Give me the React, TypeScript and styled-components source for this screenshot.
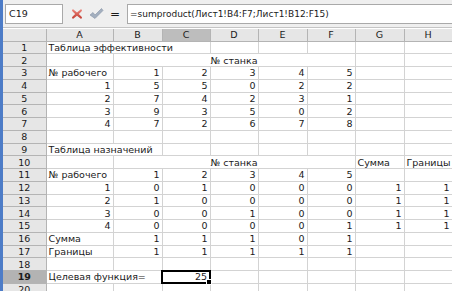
import styled, { createGlobalStyle } from 'styled-components';

const GlobalStyle = createGlobalStyle`
  html, body {
    margin: 0;
    padding: 0;
    background: #ffffff;
  }
  body {
    font-family: 'DejaVu Sans', 'Liberation Sans', sans-serif;
    font-size: 9.5px;
    color: #1a1a1a;
  }
`;

const Window = styled.div`
  display: flex;
  width: 452px;
  height: 291px;
  overflow: hidden;
`;

const Edge = styled.div`
  width: 3px;
  flex-shrink: 0;
  background: #4d7cc7;
`;

const Main = styled.div`
  flex: 1;
  min-width: 0;
  display: flex;
  flex-direction: column;
`;

const FormulaBar = styled.div`
  height: 28px;
  flex-shrink: 0;
  display: flex;
  align-items: center;
  padding-left: 2px;
  background: #efefef;
  border-bottom: 1px solid #c4c4c4;
  box-sizing: border-box;
  font-size: 9px;
`;

const NameBox = styled.div`
  width: 58px;
  height: 20px;
  box-sizing: border-box;
  border: 1px solid #a9a9a9;
  background: #ffffff;
  padding-left: 3px;
  display: flex;
  align-items: center;
  font-size: 9.5px;
`;

const IconButton = styled.div<{ $gap: number }>`
  width: 16px;
  height: 18px;
  display: flex;
  align-items: center;
  justify-content: center;
  margin-left: ${(p) => p.$gap}px;
`;

const Equals = styled.div`
  width: 12px;
  margin-left: 5px;
  font-size: 12px;
  text-align: center;
`;

const FormulaInput = styled.div`
  flex: 1;
  height: 20px;
  margin-left: 6px;
  box-sizing: border-box;
  border: 1px solid #a9a9a9;
  border-right: none;
  background: #ffffff;
  padding-left: 2px;
  display: flex;
  align-items: center;
  white-space: nowrap;
  overflow: hidden;
`;

const Sheet = styled.table`
  border-collapse: collapse;
  table-layout: fixed;
  width: 449px;
  margin-top: 1px;
`;

const Row = styled.tr`
  height: 12.75px;
`;

const HeadRow = styled.tr`
  height: 12px;
`;

const Corner = styled.th`
  background: #e6e6e6;
  border: 1px solid #b4b4b4;
  border-left: none;
  border-top: none;
  padding: 0;
`;

const ColHead = styled.th<{ $active?: boolean }>`
  background: ${(p) => (p.$active ? '#bdbdbd' : '#e6e6e6')};
  border: 1px solid #b4b4b4;
  border-top: none;
  padding: 0;
  font-weight: normal;
  text-align: center;
  line-height: 11px;
  overflow: hidden;
`;

const RowHead = styled.th<{ $active?: boolean }>`
  background: ${(p) => (p.$active ? '#b3b3b3' : '#e6e6e6')};
  border: 1px solid #b4b4b4;
  border-left: none;
  padding: 0;
  font-weight: ${(p) => (p.$active ? 'bold' : 'normal')};
  text-align: center;
  line-height: 11px;
  overflow: hidden;
`;

const Cell = styled.td<{ $align?: 'left' | 'right' | 'center' }>`
  border: 1px solid #d3d3d3;
  padding: 0 2px;
  text-align: ${(p) => p.$align || 'right'};
  line-height: 11px;
  white-space: nowrap;
  overflow: hidden;
`;

const Selected = styled.td`
  position: relative;
  border: 2px solid #000000;
  padding: 0 2px;
  text-align: right;
  line-height: 10px;
  white-space: nowrap;
`;

const FillHandle = styled.span`
  position: absolute;
  right: -3px;
  bottom: -3px;
  width: 4px;
  height: 4px;
  background: #000000;
  border: 1px solid #ffffff;
`;

const CancelIcon = () => (
  <svg width="12" height="12" viewBox="0 0 13 13">
    <defs>
      <linearGradient id="xg" x1="0" y1="0" x2="0" y2="1">
        <stop offset="0" stopColor="#ee8a80" />
        <stop offset="1" stopColor="#c0392e" />
      </linearGradient>
    </defs>
    <path d="M2 1 L6.5 5 L11 1 L12 3 L8.5 6.5 L12 10 L11 12 L6.5 8.5 L2 12 L1 10 L4.5 6.5 L1 3 Z" fill="url(#xg)" />
  </svg>
);

const AcceptIcon = () => (
  <svg width="15" height="13" viewBox="0 0 15 13">
    <path d="M1 8 L4 5.5 L6 8 L12.5 1.5 L14 3.5 L6 11.5 Z" fill="#a3afbf" stroke="#8592a5" strokeWidth="0.6" />
  </svg>
);

const cols = ['A', 'B', 'C', 'D', 'E', 'F', 'G', 'H'];
const widths = [43, 67, 49, 48, 48, 49, 48, 49, 48];

type Line = (string | number)[];

const num = (cells: Line) => cells.map((v, i) => <Cell key={i}>{v}</Cell>);
const empty = (n: number) => Array.from({ length: n }, (_, i) => <Cell key={'e' + i} />);

const App = () => {
  const rows: React.ReactNode[][] = [
    [<Cell key="t" colSpan={3} $align="left">Таблица эффективности</Cell>, ...empty(5)],
    [<Cell key="a" />, <Cell key="m" colSpan={5} $align="center">№ станка</Cell>, ...empty(2)],
    [<Cell key="a" $align="left">№ рабочего</Cell>, ...num([1, 2, 3, 4, 5]), ...empty(2)],
    [...num([1, 5, 5, 0, 2, 2]), ...empty(2)],
    [...num([2, 7, 4, 2, 3, 1]), ...empty(2)],
    [...num([3, 9, 3, 5, 0, 2]), ...empty(2)],
    [...num([4, 7, 2, 6, 7, 8]), ...empty(2)],
    [...empty(8)],
    [<Cell key="t" colSpan={2} $align="left">Таблица назначений</Cell>, ...empty(6)],
    [
      <Cell key="a" />,
      <Cell key="m" colSpan={5} $align="center">№ станка</Cell>,
      <Cell key="g" $align="left">Сумма</Cell>,
      <Cell key="h" $align="left">Границы</Cell>,
    ],
    [<Cell key="a" $align="left">№ рабочего</Cell>, ...num([1, 2, 3, 4, 5]), ...empty(2)],
    [...num([1, 0, 1, 0, 0, 0, 1, 1])],
    [...num([2, 1, 0, 0, 0, 0, 1, 1])],
    [...num([3, 0, 0, 1, 0, 0, 1, 1])],
    [...num([4, 0, 0, 0, 0, 1, 1, 1])],
    [<Cell key="a" $align="left">Сумма</Cell>, ...num([1, 1, 1, 0, 1]), ...empty(2)],
    [<Cell key="a" $align="left">Границы</Cell>, ...num([1, 1, 1, 1, 1]), ...empty(2)],
    [...empty(8)],
    [
      <Cell key="a" colSpan={2} $align="left">Целевая функция=</Cell>,
      <Selected key="c">
        25
        <FillHandle />
      </Selected>,
      ...empty(5),
    ],
    [...empty(8)],
  ];

  return (
    <>
      <GlobalStyle />
      <Window>
        <Edge />
        <Main>
          <FormulaBar>
            <NameBox>C19</NameBox>
            <IconButton $gap={6}>
              <CancelIcon />
            </IconButton>
            <IconButton $gap={3}>
              <AcceptIcon />
            </IconButton>
            <Equals>=</Equals>
            <FormulaInput>=sumproduct(Лист1!B4:F7;Лист1!B12:F15)</FormulaInput>
          </FormulaBar>
          <Sheet>
            <colgroup>
              {widths.map((w, i) => (
                <col key={i} style={{ width: w }} />
              ))}
            </colgroup>
            <thead>
              <HeadRow>
                <Corner />
                {cols.map((c) => (
                  <ColHead key={c} $active={c === 'C'}>
                    {c}
                  </ColHead>
                ))}
              </HeadRow>
            </thead>
            <tbody>
              {rows.map((cells, i) => (
                <Row key={i}>
                  <RowHead $active={i === 18}>{i + 1}</RowHead>
                  {cells}
                </Row>
              ))}
            </tbody>
          </Sheet>
        </Main>
      </Window>
    </>
  );
};

export default App;
